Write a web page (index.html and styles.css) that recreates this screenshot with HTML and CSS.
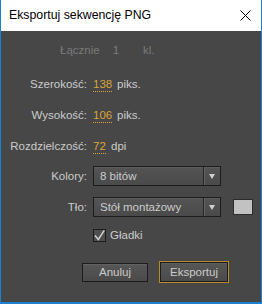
FILE: index.html
```html
<!DOCTYPE html>
<html lang="pl">
<head>
<meta charset="utf-8">
<title>Eksportuj sekwencję PNG</title>
<link rel="stylesheet" href="styles.css">
</head>
<body>
<div class="window">
  <div class="titlebar">
    <span class="title">Eksportuj sekwencję PNG</span>
    <svg class="close" width="11" height="11" viewBox="0 0 11 11"><path d="M0.5 0.5 L10.5 10.5 M10.5 0.5 L0.5 10.5" stroke="#000" stroke-width="1" fill="none"/></svg>
  </div>
  <div class="content">
    <div class="row total">
      <span class="dis">Łącznie</span>
      <span class="dis num1">1</span>
      <span class="dis kl">kl.</span>
    </div>
    <div class="row r-w">
      <span class="lbl">Szerokość:</span>
      <span class="val">138</span>
      <span class="unit">piks.</span>
    </div>
    <div class="row r-h">
      <span class="lbl">Wysokość:</span>
      <span class="val">106</span>
      <span class="unit">piks.</span>
    </div>
    <div class="row r-res">
      <span class="lbl">Rozdzielczość:</span>
      <span class="val short">72</span>
      <span class="unit">dpi</span>
    </div>
    <div class="row r-col">
      <span class="lbl">Kolory:</span>
      <div class="select"><span class="sel-text">8 bitów</span><span class="sel-btn"><span class="arrow"></span></span></div>
    </div>
    <div class="row r-bg">
      <span class="lbl">Tło:</span>
      <div class="select"><span class="sel-text">Stół montażowy</span><span class="sel-btn"><span class="arrow"></span></span></div>
      <span class="swatch"></span>
    </div>
    <div class="row r-chk">
      <span class="lbl"></span>
      <span class="checkbox"><svg width="11" height="11" viewBox="0 0 11 11"><path d="M1 5.5 L4.3 9.5 L10.3 0.3" stroke="#d4d4d4" stroke-width="1.4" fill="none"/></svg></span>
      <span class="chk-label">Gładki</span>
    </div>
    <div class="buttons">
      <button class="btn cancel">Anuluj</button>
      <button class="btn primary">Eksportuj</button>
    </div>
  </div>
</div>
</body>
</html>
```
FILE: styles.css
```css
html, body {
  margin: 0;
  padding: 0;
}
body {
  width: 262px;
  height: 304px;
  overflow: hidden;
  background: #474747;
}
.window {
  box-sizing: border-box;
  width: 262px;
  height: 304px;
  border: 1px solid #1f7fd1;
  border-top: none;
  border-bottom-width: 2px;
  background: #474747;
  display: flex;
  flex-direction: column;
}
.titlebar {
  height: 31px;
  flex: none;
  background: #ffffff;
  display: flex;
  align-items: center;
  justify-content: space-between;
  padding: 0 10px 0 8px;
  font-family: "Liberation Sans", Arial, sans-serif;
  font-size: 12.3px;
  color: #000;
}
.title {
  margin-top: -2px;
}
.close {
  display: block;
  margin-top: -1px;
}
.content {
  flex: 1;
  display: flex;
  flex-direction: column;
  font-family: "Liberation Sans", Arial, sans-serif;
  font-size: 11.5px;
  color: #cbcbcb;
}
.row {
  display: flex;
  align-items: center;
  height: 20px;
}
.total { margin-top: 9px; padding-left: 59px; }
.r-w { margin-top: 14px; }
.r-h { margin-top: 11px; }
.r-res { margin-top: 11px; }
.r-col { margin-top: 10px; }
.r-bg { margin-top: 11px; }
.r-chk { margin-top: 8px; }
.dis { color: #7a7a7a; }
.num1 { margin-left: 13px; }
.kl { margin-left: 24px; }
.lbl {
  width: 86px;
  text-align: right;
  margin-right: 6px;
  flex: none;
}
.val {
  color: #d9a43b;
  width: 19px;
  border-bottom: 1px dotted #d9a43b;
  line-height: 13px;
  margin-top: 1px;
}
.val.short { width: 13px; }
.unit { margin-left: 5px; }
.select {
  box-sizing: border-box;
  width: 128px;
  height: 20px;
  border: 1px solid #1c1c1c;
  background: linear-gradient(#545454, #4a4a4a);
  box-shadow: inset 0 1px 0 #5c5c5c;
  display: flex;
  align-items: center;
}
.sel-text {
  flex: 1;
  padding-left: 6px;
}
.sel-btn {
  width: 16px;
  height: 18px;
  border-left: 1px solid #262626;
  box-shadow: inset 1px 0 0 #626262;
  display: flex;
  align-items: center;
  justify-content: center;
}
.arrow {
  width: 0;
  height: 0;
  border-left: 3.5px solid transparent;
  border-right: 3.5px solid transparent;
  border-top: 5px solid #d0d0d0;
}
.swatch {
  box-sizing: border-box;
  width: 20px;
  height: 16px;
  margin-left: 12px;
  border: 1px solid #2c2c2c;
  background: #c2c2c2;
}
.checkbox {
  box-sizing: border-box;
  width: 13px;
  height: 13px;
  border: 1px solid #1c1c1c;
  background: #4e4e4e;
  display: flex;
  align-items: center;
  justify-content: center;
}
.checkbox svg { display: block; }
.chk-label { margin-left: 4px; }
.buttons {
  display: flex;
  align-items: center;
  margin-top: 16px;
  padding-left: 81px;
  gap: 11px;
}
.btn {
  box-sizing: border-box;
  font-family: "Liberation Sans", Arial, sans-serif;
  font-size: 11.5px;
  color: #cbcbcb;
  padding: 0;
  margin: 0;
  border: 1px solid #1c1c1c;
  background: linear-gradient(#575757, #4a4a4a);
  box-shadow: inset 0 1px 0 #626262;
}
.cancel {
  width: 66px;
  height: 19px;
}
.primary {
  width: 70px;
  height: 22px;
  border: 1px solid #b98a2e;
  box-shadow: inset 0 0 0 1px #1c1c1c, inset 0 2px 0 #5e5e5e;
}
```
